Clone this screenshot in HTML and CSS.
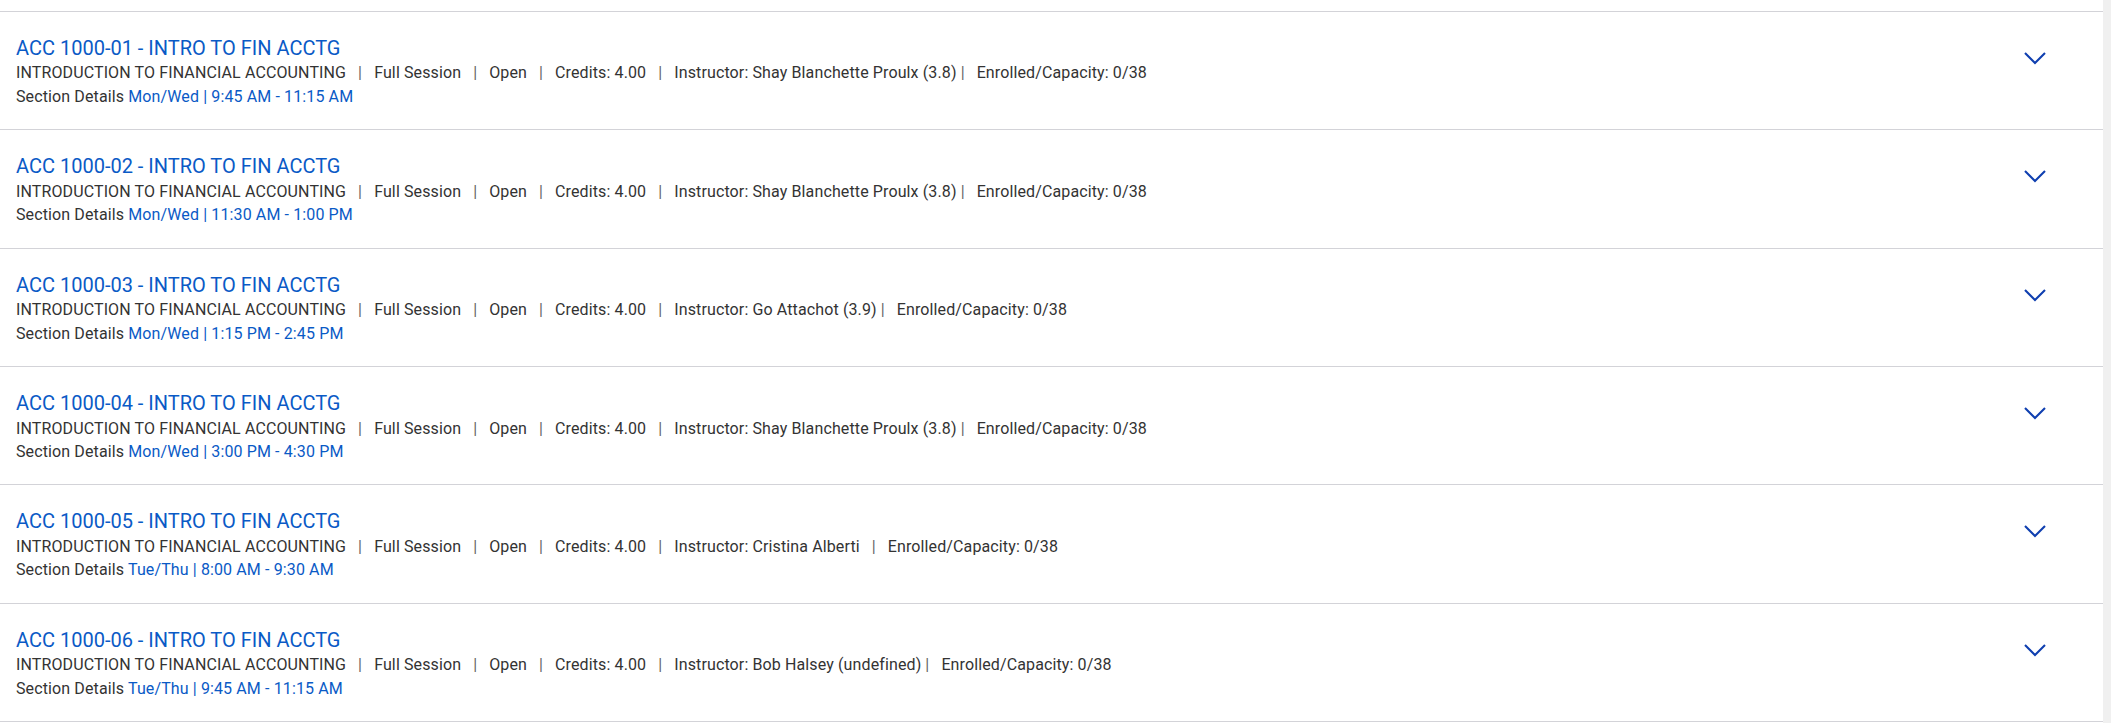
FILE: index.html
```html
<!DOCTYPE html>
<html lang="en">
<head>
<meta charset="utf-8">
<title>Sections</title>
<link rel="stylesheet" href="styles.css">
</head>
<body>
<div class="page">
  <div class="list">
    <div class="row">
      <div class="info">
        <a class="title" href="#">ACC 1000-01 - INTRO TO FIN ACCTG</a>
        <div class="meta">INTRODUCTION TO FINANCIAL ACCOUNTING<span class="sep">|</span>Full Session<span class="sep">|</span>Open<span class="sep">|</span>Credits: 4.00<span class="sep">|</span>Instructor: Shay Blanchette Proulx (3.8)<span class="sep tight">|</span>Enrolled/Capacity: 0/38</div>
        <div class="details">Section Details <span class="time">Mon/Wed | 9:45 AM - 11:15 AM</span></div>
      </div>
      <button class="toggle" aria-label="Expand"><svg viewBox="0 0 24 24" width="24" height="24"><polyline points="2,7 12,17 22,7"/></svg></button>
    </div>
    <div class="row">
      <div class="info">
        <a class="title" href="#">ACC 1000-02 - INTRO TO FIN ACCTG</a>
        <div class="meta">INTRODUCTION TO FINANCIAL ACCOUNTING<span class="sep">|</span>Full Session<span class="sep">|</span>Open<span class="sep">|</span>Credits: 4.00<span class="sep">|</span>Instructor: Shay Blanchette Proulx (3.8)<span class="sep tight">|</span>Enrolled/Capacity: 0/38</div>
        <div class="details">Section Details <span class="time">Mon/Wed | 11:30 AM - 1:00 PM</span></div>
      </div>
      <button class="toggle" aria-label="Expand"><svg viewBox="0 0 24 24" width="24" height="24"><polyline points="2,7 12,17 22,7"/></svg></button>
    </div>
    <div class="row">
      <div class="info">
        <a class="title" href="#">ACC 1000-03 - INTRO TO FIN ACCTG</a>
        <div class="meta">INTRODUCTION TO FINANCIAL ACCOUNTING<span class="sep">|</span>Full Session<span class="sep">|</span>Open<span class="sep">|</span>Credits: 4.00<span class="sep">|</span>Instructor: Go Attachot (3.9)<span class="sep tight">|</span>Enrolled/Capacity: 0/38</div>
        <div class="details">Section Details <span class="time">Mon/Wed | 1:15 PM - 2:45 PM</span></div>
      </div>
      <button class="toggle" aria-label="Expand"><svg viewBox="0 0 24 24" width="24" height="24"><polyline points="2,7 12,17 22,7"/></svg></button>
    </div>
    <div class="row">
      <div class="info">
        <a class="title" href="#">ACC 1000-04 - INTRO TO FIN ACCTG</a>
        <div class="meta">INTRODUCTION TO FINANCIAL ACCOUNTING<span class="sep">|</span>Full Session<span class="sep">|</span>Open<span class="sep">|</span>Credits: 4.00<span class="sep">|</span>Instructor: Shay Blanchette Proulx (3.8)<span class="sep tight">|</span>Enrolled/Capacity: 0/38</div>
        <div class="details">Section Details <span class="time">Mon/Wed | 3:00 PM - 4:30 PM</span></div>
      </div>
      <button class="toggle" aria-label="Expand"><svg viewBox="0 0 24 24" width="24" height="24"><polyline points="2,7 12,17 22,7"/></svg></button>
    </div>
    <div class="row">
      <div class="info">
        <a class="title" href="#">ACC 1000-05 - INTRO TO FIN ACCTG</a>
        <div class="meta">INTRODUCTION TO FINANCIAL ACCOUNTING<span class="sep">|</span>Full Session<span class="sep">|</span>Open<span class="sep">|</span>Credits: 4.00<span class="sep">|</span>Instructor: Cristina Alberti<span class="sep">|</span>Enrolled/Capacity: 0/38</div>
        <div class="details">Section Details <span class="time">Tue/Thu | 8:00 AM - 9:30 AM</span></div>
      </div>
      <button class="toggle" aria-label="Expand"><svg viewBox="0 0 24 24" width="24" height="24"><polyline points="2,7 12,17 22,7"/></svg></button>
    </div>
    <div class="row">
      <div class="info">
        <a class="title" href="#">ACC 1000-06 - INTRO TO FIN ACCTG</a>
        <div class="meta">INTRODUCTION TO FINANCIAL ACCOUNTING<span class="sep">|</span>Full Session<span class="sep">|</span>Open<span class="sep">|</span>Credits: 4.00<span class="sep">|</span>Instructor: Bob Halsey (undefined)<span class="sep tight">|</span>Enrolled/Capacity: 0/38</div>
        <div class="details">Section Details <span class="time">Tue/Thu | 9:45 AM - 11:15 AM</span></div>
      </div>
      <button class="toggle" aria-label="Expand"><svg viewBox="0 0 24 24" width="24" height="24"><polyline points="2,7 12,17 22,7"/></svg></button>
    </div>
  </div>
  <div class="scrollbar"></div>
</div>
</body>
</html>
```
FILE: styles.css
```css
html, body {
  margin: 0;
  padding: 0;
  background: #ffffff;
}

body {
  font-family: Roboto, "Liberation Sans", sans-serif;
  color: #333333;
}

.page {
  display: flex;
  height: 723px;
  overflow: hidden;
}

.list {
  flex: 1;
  padding-top: 10.8px;
}

.scrollbar {
  width: 8px;
  background: #f0f0f0;
}

.row {
  display: flex;
  border-top: 1px solid #d3d3d8;
  padding: 24.2px 56px 20.2px 16px;
}

.row:last-child {
  border-bottom: 1px solid #d3d3d8;
}

.info {
  flex: 1;
  display: flex;
  flex-direction: column;
  align-items: flex-start;
}

.title {
  font-size: 20px;
  line-height: 25px;
  color: #0a5ac6;
  text-decoration: none;
}

.meta,
.details {
  font-size: 16px;
  line-height: 24px;
  letter-spacing: 0.12px;
  color: #333333;
  white-space: nowrap;
}

.meta {
  line-height: 23px;
  margin-top: 0.5px;
  margin-bottom: 0.5px;
}

.sep {
  margin: 0 12px;
  color: #666666;
}

.sep.tight {
  margin-left: 4px;
}

.time {
  color: #0a5ac6;
}

.toggle {
  align-self: flex-start;
  margin-top: 10px;
  padding: 0;
  border: 0;
  background: transparent;
  width: 24px;
  height: 24px;
  display: flex;
}

.toggle svg {
  display: block;
  fill: none;
  stroke: #0f3fb0;
  stroke-width: 2.1;
}
```
